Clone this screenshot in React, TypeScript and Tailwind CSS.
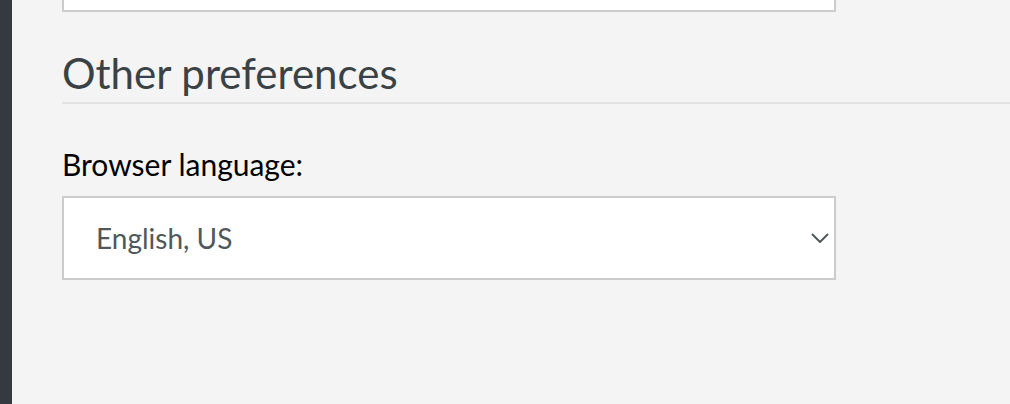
export default function App() {
  return (
    <div className="flex h-[404px] w-[1010px] overflow-hidden bg-[#f4f4f4] font-['Lato',sans-serif]">
      <div className="w-[12px] shrink-0 bg-[#343a40]" />
      <main className="flex-1 pl-[50px]">
        <div className="-mt-[40px] h-[52px] w-[774px] border-2 border-[#cccccc] bg-white" />

        <h2 className="mt-[36px] text-[42px] leading-[50px] text-[#3a4246]">Other preferences</h2>
        <div className="mt-[4px] h-[2px] bg-[#e3e3e3]" />

        <label className="mt-[42px] block text-[30px] leading-[36px] text-black">Browser language:</label>
        <div className="relative mt-[14px] flex h-[84px] w-[774px] items-center border-2 border-[#cccccc] bg-white pl-[32px]">
          <span className="text-[28px] leading-[42px] text-[#51585c]">English, US</span>
          <svg
            className="absolute right-[5px] top-[35px]"
            width="18"
            height="10"
            viewBox="0 0 18 10"
            fill="none"
            stroke="#51585c"
            strokeWidth="2"
          >
            <polyline points="1,1 9,9 17,1" />
          </svg>
        </div>
      </main>
    </div>
  );
}
